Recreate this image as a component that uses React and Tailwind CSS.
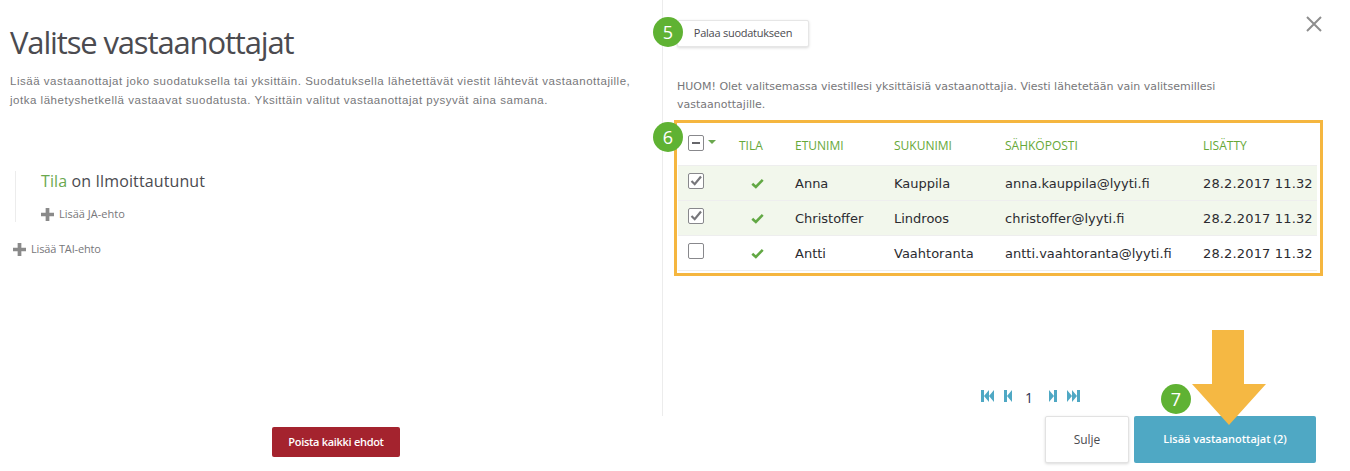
import React from "react";

const rows = [
  { first: "Anna", last: "Kauppila", email: "anna.kauppila@lyyti.fi", checked: true },
  { first: "Christoffer", last: "Lindroos", email: "christoffer@lyyti.fi", checked: true },
  { first: "Antti", last: "Vaahtoranta", email: "antti.vaahtoranta@lyyti.fi", checked: false },
];

const gridCols = "grid grid-cols-[51px_56px_99px_111px_198px_1fr] items-center";

function Badge({ children, className }) {
  return (
    <div
      className={`absolute flex h-[30px] w-[30px] items-center justify-center rounded-full bg-[#5fb233] font-['Open_Sans',sans-serif] text-[18px] text-white ${className}`}
    >
      {children}
    </div>
  );
}

function Box({ checked, dash }) {
  return (
    <span className="relative block h-4 w-4 rounded-[2px] border border-[#88888c] bg-white">
      {dash && <span className="absolute left-[3px] top-[6px] h-[2px] w-2 bg-[#66666a]" />}
      {checked && (
        <svg viewBox="0 0 16 16" className="absolute -left-px -top-px h-4 w-4">
          <path d="M3.5 8l3.2 3.2L13 3.5" fill="none" stroke="#77777b" strokeWidth="2.2" />
        </svg>
      )}
    </span>
  );
}

function Plus() {
  return (
    <svg viewBox="0 0 14 14" className="h-[13px] w-[13px]">
      <path d="M5 0h4v5h5v4H9v5H5V9H0V5h5z" fill="#8a8a8a" />
    </svg>
  );
}

function Check() {
  return (
    <svg viewBox="0 0 14 12" className="h-[11px] w-[13px]">
      <path d="M1.3 6.2l3.9 3.6L12.7 2" fill="none" stroke="#62a844" strokeWidth="2.8" />
    </svg>
  );
}

function PagerIcon({ d, w }) {
  return (
    <svg viewBox={`0 0 ${w} 12`} width={w} height={12}>
      <path d={d} fill="#4fa8c4" />
    </svg>
  );
}

export default function App() {
  return (
    <div className="flex h-[471px] w-[1350px] flex-col overflow-hidden bg-white font-['DejaVu_Sans',sans-serif]">
      <div className="flex h-[416px]">
        {/* left side */}
        <div className="w-[663px] shrink-0 border-r border-[#ececec] pl-[10px]">
          <h1 className="mt-[22px] font-['Open_Sans',sans-serif] text-[31px] font-medium leading-[40px] tracking-[-1.15px] text-[#4b4b50]">
            Valitse vastaanottajat
          </h1>
          <p className="mt-[10px] w-[650px] whitespace-nowrap font-['Liberation_Sans',sans-serif] text-[11.5px] leading-[19px] tracking-[0.52px] text-[#77777a]">
            Lisää vastaanottajat joko suodatuksella tai yksittäin. Suodatuksella lähetettävät viestit lähtevät vastaanottajille,
            <br />
            jotka lähetyshetkellä vastaavat suodatusta. Yksittäin valitut vastaanottajat pysyvät aina samana.
          </p>
          <div className="ml-[5px] mt-[61px] h-[51px] border-l border-[#ececec] pl-[25px]">
            <div className="font-['Open_Sans',sans-serif] text-[16px] leading-[20px] tracking-[0.12px] text-[#4b4b50]">
              <span className="text-[#6aa84f]">Tila</span> on Ilmoittautunut
            </div>
            <div className="mt-[15px] flex items-center gap-[5px] font-['Open_Sans',sans-serif] text-[11px] text-[#77777a]">
              <Plus />
              Lisää JA-ehto
            </div>
          </div>
          <div className="ml-[3px] mt-[19px] flex items-center gap-[5px] font-['Open_Sans',sans-serif] text-[11px] tracking-[-0.15px] text-[#77777a]">
            <Plus />
            Lisää TAI-ehto
          </div>
        </div>

        {/* right side */}
        <div className="relative flex-1 pl-[14px] pt-[20px]">
          <Badge className="left-[-10px] top-[17px]">5</Badge>
          <button className="h-[27px] w-[132px] rounded-[2px] border border-[#e6e6e6] bg-white font-['Open_Sans',sans-serif] text-[11px] tracking-[-0.25px] text-[#4b4b50] shadow-[0_1px_3px_rgba(0,0,0,0.15)]">
            Palaa suodatukseen
          </button>
          <button className="absolute right-[28px] top-[16px]" aria-label="Sulje">
            <svg viewBox="0 0 16 16" className="h-4 w-4">
              <path d="M1 1l14 14M15 1L1 15" stroke="#8e8e8e" strokeWidth="2" />
            </svg>
          </button>
          <p className="mt-[31px] text-[11px] leading-[17.5px] text-[#77777a]">
            HUOM! Olet valitsemassa viestillesi yksittäisiä vastaanottajia. Viesti lähetetään vain valitsemillesi
            <br />
            vastaanottajille.
          </p>

          <Badge className="left-[-10px] top-[122px]">6</Badge>
          <div className="ml-[-3px] mt-[7px] w-[649px] border-[3px] border-[#f5b63f] pb-[2px] pl-[1px] pr-[3px]">
            <div className={`${gridCols} h-[43px] border-b border-[#eeeeee] pl-[10px] font-['Open_Sans',sans-serif] text-[12px] font-medium text-[#66a838]`}>
              <div className="mb-[3px] flex items-center gap-[4px]">
                <Box dash />
                <span className="mb-[2px] h-0 w-0 border-x-[4px] border-t-[4px] border-x-transparent border-t-[#6aa84f]" />
              </div>
              <div className="pt-[3px]">TILA</div>
              <div className="pt-[3px]">ETUNIMI</div>
              <div className="pt-[3px]">SUKUNIMI</div>
              <div className="pt-[3px]">SÄHKÖPOSTI</div>
              <div className="pt-[3px]">LISÄTTY</div>
            </div>
            {rows.map((row) => (
              <div
                key={row.email}
                className={`${gridCols} h-[35px] border-b border-[#eeeeee] pl-[10px] text-[13px] text-[#2b2b30] ${row.checked ? "bg-[#f2f7ec]" : "bg-white"}`}
              >
                <div className="mb-[4px]">
                  <Box checked={row.checked} />
                </div>
                <div className="pl-[12px]">
                  <Check />
                </div>
                <div className="pt-[2px]">{row.first}</div>
                <div className="pt-[2px]">{row.last}</div>
                <div className="pt-[2px]">{row.email}</div>
                <div className="whitespace-nowrap pt-[2px] tracking-[0.15px]">28.2.2017 11.32</div>
              </div>
            ))}
          </div>

          <div className="absolute left-[318px] top-[389px] flex h-[14px] items-center">
            <PagerIcon w={13} d="M0 0h3v12H0zM3 6l5-6v12zM8 6l5-6v12z" />
            <span className="ml-[10px]">
              <PagerIcon w={8} d="M0 0h3v12H0zM3 6l5-6v12z" />
            </span>
            <span className="ml-[13px] mr-[16px] mt-[2px] font-['Open_Sans',sans-serif] text-[14px] text-[#2b3350]">1</span>
            <PagerIcon w={8} d="M0 0l5 6-5 6zM5 0h3v12H5z" />
            <span className="ml-[10px]">
              <PagerIcon w={13} d="M0 0l5 6-5 6zM5 0l5 6-5 6zM10 0h3v12h-3z" />
            </span>
          </div>
        </div>
      </div>

      {/* footer */}
      <div className="relative flex h-[55px] items-start">
        <button className="ml-[272px] mt-[11px] h-[30px] w-[128px] rounded-[2px] bg-[#a4232e] font-['Open_Sans',sans-serif] text-[11px] font-semibold tracking-[-0.3px] text-white">
          Poista kaikki ehdot
        </button>
        <button className="ml-[645px] mt-0 h-[47px] w-[84px] rounded-[2px] border border-[#e2e2e2] bg-white font-['Open_Sans',sans-serif] text-[12px] text-[#4b4b50] shadow-[0_1px_3px_rgba(0,0,0,0.15)]">
          Sulje
        </button>
        <button className="ml-[5px] h-[47px] w-[182px] rounded-[2px] bg-[#4fa8c4] font-['Open_Sans',sans-serif] text-[11px] font-semibold text-white">
          Lisää vastaanottajat (2)
        </button>
      </div>

      <Badge className="left-[1161px] top-[384px]">7</Badge>
      <svg viewBox="0 0 76 96" className="absolute left-[1191px] top-[330px] h-[96px] w-[76px]">
        <path d="M21 0h32v54h22L38 95 1 54h20z" fill="#f5b843" />
      </svg>
    </div>
  );
}
